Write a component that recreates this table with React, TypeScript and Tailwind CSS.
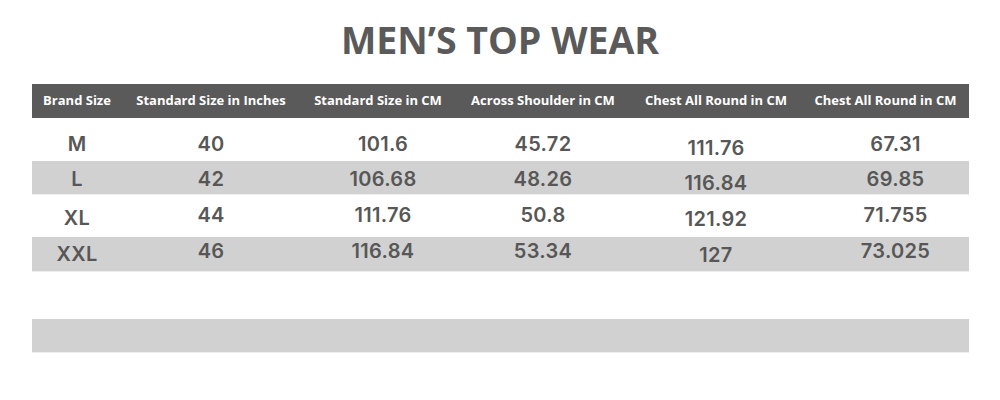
import React from "react";

const headers = [
  "Brand Size",
  "Standard Size in Inches",
  "Standard Size in CM",
  "Across Shoulder in CM",
  "Chest All Round in CM",
  "Chest All Round in CM",
];

const rows = [
  { cells: ["M", "40", "101.6", "45.72", "111.76", "67.31"], h: "h-[43px]", pt: "pt-[13px]", bg: "bg-white", low0: false },
  { cells: ["L", "42", "106.68", "48.26", "116.84", "69.85"], h: "h-[34px]", pt: "pt-[5px]", bg: "bg-[#d1d1d1]", low0: false },
  { cells: ["XL", "44", "111.76", "50.8", "121.92", "71.755"], h: "h-[42px]", pt: "pt-[7px]", bg: "bg-white", low0: true },
  { cells: ["XXL", "46", "116.84", "53.34", "127", "73.025"], h: "h-[35px]", pt: "pt-[1px]", bg: "bg-[#d1d1d1]", low0: true },
];

const cols = "grid grid-cols-[90px_178px_156px_174px_172px_167px]";

// data values are not quite centred under their headers in the picture
const cellPad = ["", "", "pl-[10px]", "", "", "pl-[20px]"];

export default function App() {
  return (
    <div
      className="w-[1000px] h-[400px] bg-white pt-[18px]"
      style={{ fontFamily: '"Open Sans", "Liberation Sans", sans-serif' }}
    >
      <h1 className="text-center text-[37.5px] leading-[44px] font-bold text-[#5a5a5a]">
        MEN’S TOP WEAR
      </h1>

      <div className="mx-[32px] mt-[22px] w-[937px]">
        <div className={`${cols} h-[34px] items-center bg-[#5a5a5a] text-white text-[13px] font-bold`}>
          {headers.map((h, i) => (
            <div key={i} className="text-center whitespace-nowrap">
              {h}
            </div>
          ))}
        </div>

        {rows.map((r, ri) => (
          <div
            key={ri}
            className={`${cols} ${r.h} ${r.bg} ${r.bg === "bg-white" ? "" : "border-b border-[#eeeeee]"} font-[Inter] text-[20px] font-semibold tracking-[0.3px] text-[#575757] leading-[26px]`}
          >
            {r.cells.map((c, ci) => {
              // the 5th column and the lower brand sizes sit a few pixels down in the picture
              const shift = ci === 4 ? "relative top-[4px]" : ci === 0 && r.low0 ? "relative top-[3px]" : "";
              return (
                <div key={ci} className={`text-center ${r.pt} ${cellPad[ci]}`}>
                  <span className={shift}>{c}</span>
                </div>
              );
            })}
          </div>
        ))}

        <div className="h-[47px] bg-white" />
        <div className="h-[34px] bg-[#d1d1d1] border-b border-[#eeeeee]" />
      </div>
    </div>
  );
}
